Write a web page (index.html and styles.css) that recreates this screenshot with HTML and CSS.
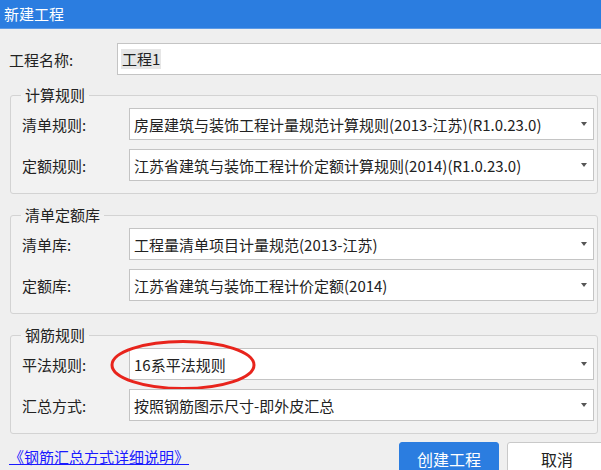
FILE: index.html
```html
<!DOCTYPE html>
<html lang="zh-CN">
<head>
<meta charset="utf-8">
<title>新建工程</title>
<link rel="stylesheet" href="styles.css">
</head>
<body>
<div class="dialog">
  <div class="titlebar">新建工程</div>
  <div class="content">
    <div class="name-row">
      <span class="name-label">工程名称:</span>
      <div class="name-input"><span class="sel">工程1</span></div>
    </div>

    <div class="group">
      <span class="group-title">计算规则</span>
      <div class="row">
        <span class="label">清单规则:</span>
        <div class="select"><span class="value">房屋建筑与装饰工程计量规范计算规则(2013-江苏)(R1.0.23.0)</span><span class="arrow"></span></div>
      </div>
      <div class="row">
        <span class="label">定额规则:</span>
        <div class="select"><span class="value">江苏省建筑与装饰工程计价定额计算规则(2014)(R1.0.23.0)</span><span class="arrow"></span></div>
      </div>
    </div>

    <div class="group">
      <span class="group-title">清单定额库</span>
      <div class="row">
        <span class="label">清单库:</span>
        <div class="select"><span class="value">工程量清单项目计量规范(2013-江苏)</span><span class="arrow"></span></div>
      </div>
      <div class="row">
        <span class="label">定额库:</span>
        <div class="select"><span class="value">江苏省建筑与装饰工程计价定额(2014)</span><span class="arrow"></span></div>
      </div>
    </div>

    <div class="group">
      <span class="group-title">钢筋规则</span>
      <div class="row">
        <span class="label">平法规则:</span>
        <div class="select"><span class="value">16系平法规则</span><span class="arrow"></span></div>
        <svg class="ring" width="150" height="52" viewBox="0 0 150 52"><ellipse cx="75" cy="26" rx="71" ry="23.5" fill="none" stroke="#e8241c" stroke-width="3"/></svg>
      </div>
      <div class="row">
        <span class="label">汇总方式:</span>
        <div class="select"><span class="value">按照钢筋图示尺寸-即外皮汇总</span><span class="arrow"></span></div>
      </div>
    </div>

    <div class="footer">
      <a class="link" href="#">《钢筋汇总方式详细说明》</a>
      <div class="buttons">
        <button class="btn btn-primary">创建工程</button>
        <button class="btn btn-default">取消</button>
      </div>
    </div>
  </div>
</div>
</body>
</html>
```

FILE: styles.css
```css
* { box-sizing: border-box; }
html, body {
  margin: 0;
  padding: 0;
  width: 601px;
  height: 470px;
  overflow: hidden;
  background: #efefef;
  font-family: "Noto Sans CJK SC", "Noto Sans", "Liberation Sans", sans-serif;
  font-size: 15px;
  color: #222;
}
.dialog {
  width: 620px;
}
.titlebar {
  height: 29px;
  background: #2b7de0;
  color: #fff;
  font-size: 15px;
  line-height: 28px;
  padding-left: 4px;
  border-bottom: 1px solid #5c9ae6;
}
.content {
  padding: 14px 0 0 0;
}
.name-row {
  display: flex;
  align-items: center;
  height: 32px;
  padding-left: 9px;
}
.name-label {
  width: 108px;
}
.name-input {
  flex: 1;
  height: 32px;
  background: #fff;
  border: 1px solid #c4c4c4;
  display: flex;
  align-items: center;
  padding-left: 3px;
}
.sel {
  background: #e6e6e6;
  padding: 0 1px;
  line-height: 20px;
}
.group {
  position: relative;
  margin: 20px 0 0 10px;
  width: 588px;
  border: 1px solid #d3d3d3;
  border-radius: 3px;
  background: #f2f2f2;
  padding: 12px 3px 12px 11px;
  display: flex;
  flex-direction: column;
  gap: 9px;
}
.group + .group {
  margin-top: 21px;
}
.group-title {
  position: absolute;
  left: 10px;
  top: -11px;
  padding: 0 4px;
  line-height: 20px;
  background: linear-gradient(#efefef 50%, #f2f2f2 50%);
}
.row {
  position: relative;
  display: flex;
  align-items: center;
  height: 32px;
}
.label {
  width: 107px;
}
.select {
  flex: 1;
  height: 32px;
  background: #fff;
  border: 1px solid #c4c4c4;
  display: flex;
  align-items: center;
  padding: 0 6px 0 4px;
}
.value {
  flex: 1;
  white-space: nowrap;
}
.arrow {
  width: 0;
  height: 0;
  border-left: 3.5px solid transparent;
  border-right: 3.5px solid transparent;
  border-top: 4px solid #555;
}
.ring {
  position: absolute;
  left: 86px;
  top: -9px;
  pointer-events: none;
}
.footer {
  display: flex;
  justify-content: space-between;
  align-items: flex-start;
  padding-left: 9px;
  margin-top: 8px;
}
.link {
  color: #1a1aff;
  text-decoration: underline;
  margin-top: 4px;
  line-height: 22px;
}
.buttons {
  display: flex;
  gap: 8px;
  margin-right: 13px;
}
.btn {
  font-family: inherit;
  font-size: 16px;
  height: 36px;
  border-radius: 3px;
  padding: 0 0 2px 0;
}
.btn-primary {
  width: 100px;
  background: #2b7de0;
  border: 1px solid #2b7de0;
  color: #fff;
}
.btn-default {
  width: 100px;
  background: #fff;
  border: 1px solid #c9c9c9;
  color: #222;
}
```
